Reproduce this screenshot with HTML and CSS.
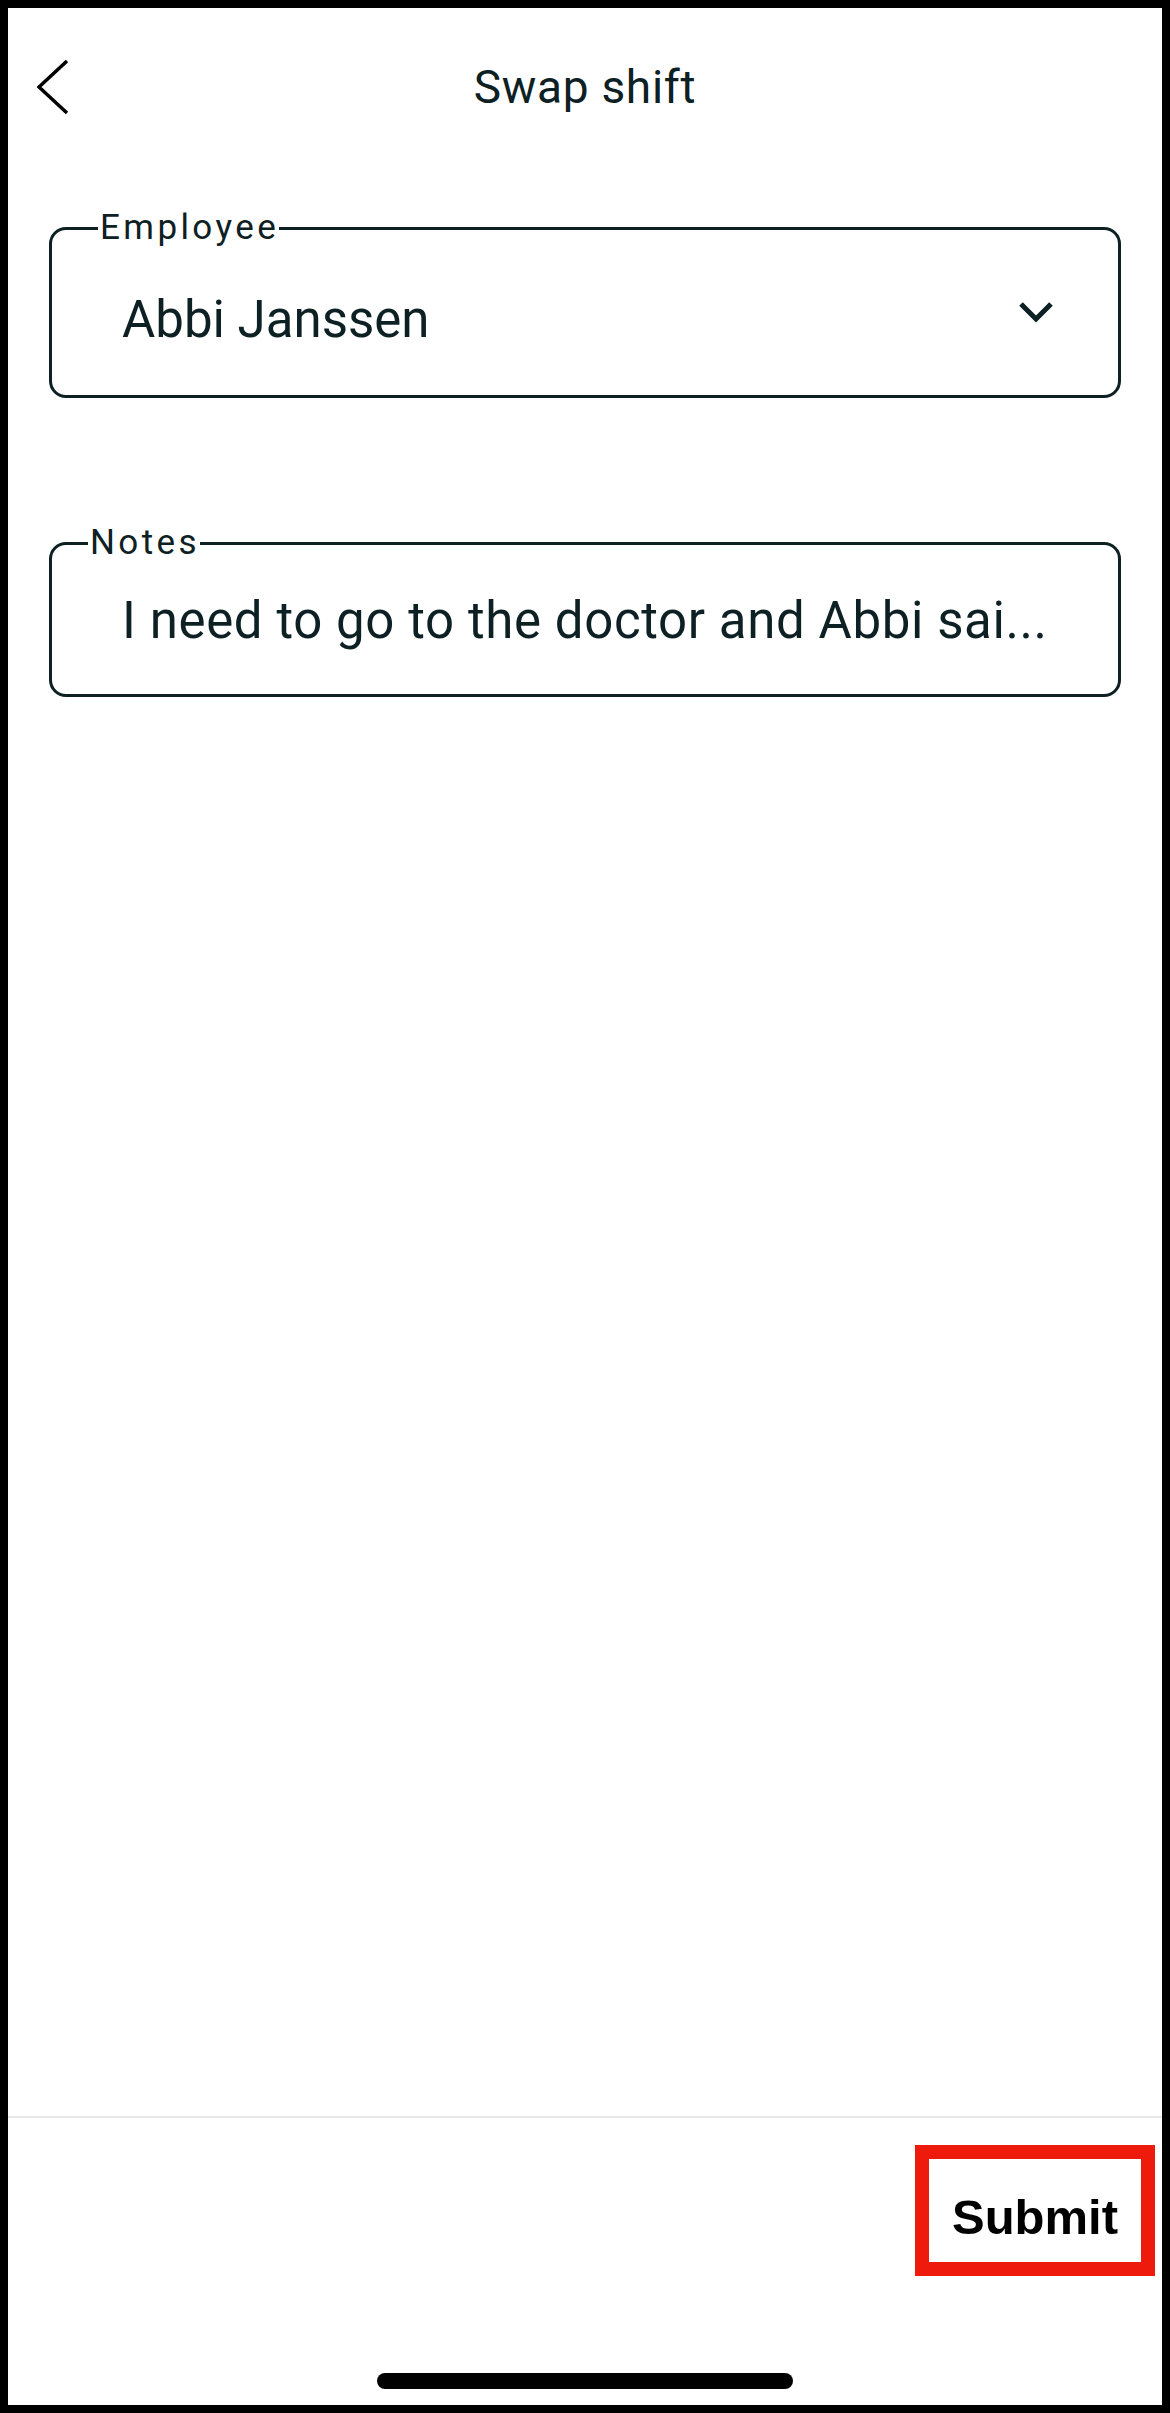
FILE: index.html
```html
<!DOCTYPE html>
<html lang="en">

<head>
	<meta charset="UTF-8">
	<meta name="viewport" content="width=device-width, initial-scale=1.0">
	<title>Swap shift</title>
	<link rel="stylesheet" href="styles.css">
</head>

<body>
	<div class="screen">
		<header class="topbar">
			<button class="back-button" aria-label="Back">
				<svg width="32" height="56" viewBox="0 0 32 56">
					<path d="M30 2 L2 28 L30 54" fill="none" stroke="#000" stroke-width="3.5" />
				</svg>
			</button>
			<h1>Swap shift</h1>
			<span></span>
		</header>

		<main class="form">
			<fieldset class="field field--employee">
				<legend>Employee</legend>
				<div class="field-value">
					<span>Abbi Janssen</span>
					<svg class="field-chevron" width="36" height="22" viewBox="0 0 36 22">
						<path d="M3 3 L18 18 L33 3" fill="none" stroke="#0d2023" stroke-width="5" />
					</svg>
				</div>
			</fieldset>

			<fieldset class="field field--notes">
				<legend>Notes</legend>
				<div class="field-value">
					<span>I need to go to the doctor and Abbi sai...</span>
				</div>
			</fieldset>
		</main>

		<footer class="actions">
			<button class="submit-button">Submit</button>
		</footer>
		<div class="home-bar"></div>
	</div>
</body>

</html>
```

FILE: styles.css
```css
body {
	margin: 0;
	padding: 0;
	background: #fff;
	font-family: Roboto, 'Noto Sans', sans-serif;
	color: #0d2023;
}

.screen {
	box-sizing: border-box;
	height: 2413px;
	border: 8px solid #000;
	display: flex;
	flex-direction: column;
}

.topbar {
	display: grid;
	grid-template-columns: 1fr auto 1fr;
	align-items: center;
	height: 56px;
	padding: 51px 0 0 29px;
}

.back-button {
	background: none;
	border: 0;
	padding: 0;
	width: 32px;
	height: 56px;
	display: block;
}

.topbar h1 {
	margin: 0;
	font-size: 46px;
	font-weight: 400;
	line-height: 56px;
	letter-spacing: 0.7px;
	margin-left: -29px;
}

.form {
	flex: 1;
	padding-top: 95px;
}

.field {
	margin: 0 41px;
	padding: 0 64px 0 70px;
	min-width: 0;
	border: 3px solid #0d2023;
	border-radius: 17px;
}

.field legend {
	padding: 0 0 0 2px;
	font-size: 35px;
	line-height: 36px;
	letter-spacing: 3.4px;
}

.field-value {
	display: flex;
	justify-content: space-between;
	align-items: flex-start;
	font-size: 51px;
	line-height: 60px;
	white-space: nowrap;
}

.field-chevron {
	margin-top: 11px;
}

.field--employee {
	padding-top: 44px;
	padding-bottom: 45px;
}

.field--employee legend {
	margin-left: -24px;
}

.field--notes {
	margin-top: 127px;
	padding-top: 30px;
	padding-bottom: 43px;
}

.field--notes .field-value {
	letter-spacing: 0.6px;
}

.field--notes legend {
	margin-left: -34px;
}

.actions {
	border-top: 2px solid #e8e8e8;
	padding: 27px 7px 0 0;
	display: flex;
	justify-content: flex-end;
}

.submit-button {
	box-sizing: border-box;
	width: 240px;
	height: 131px;
	padding: 12px 0 0;
	border: 14px solid #ee1a0b;
	background: #fff;
	color: #000;
	font-family: 'Liberation Sans', Arial, sans-serif;
	font-size: 49px;
	font-weight: 700;
}

.home-bar {
	width: 416px;
	height: 16px;
	margin: 97px auto 16px;
	border-radius: 8px;
	background: #000;
}
```
